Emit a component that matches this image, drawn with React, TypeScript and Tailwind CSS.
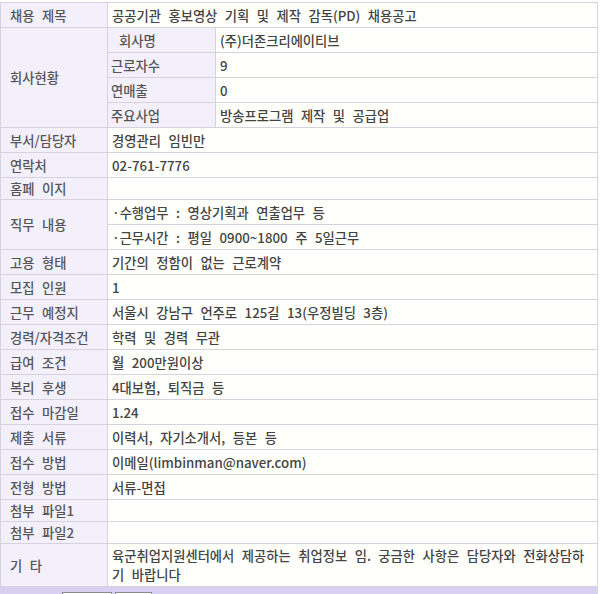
const label = "flex items-center pl-[9px] bg-[#f3f0fc] text-[#555]";
const sub = "flex items-center pl-[3px] bg-[#f3f0fc] text-[#555] h-[24px]";
const val = "flex items-center pl-[4px] bg-[#fffffb] text-[#444]";

type Row = { label: string; value?: string; empty?: boolean };

const rowsA: Row[] = [
  { label: "부서/담당자", value: "경영관리 임빈만" },
  { label: "연락처", value: "02-761-7776" },
  { label: "홈페 이지", empty: true },
];

const rowsB: Row[] = [
  { label: "고용 형태", value: "기간의 정함이 없는 근로계약" },
  { label: "모집 인원", value: "1" },
  { label: "근무 예정지", value: "서울시 강남구 언주로 125길 13(우정빌딩 3층)" },
  { label: "경력/자격조건", value: "학력 및 경력 무관" },
  { label: "급여 조건", value: "월 200만원이상" },
  { label: "복리 후생", value: "4대보험, 퇴직금 등" },
  { label: "접수 마감일", value: "1.24" },
  { label: "제출 서류", value: "이력서, 자기소개서, 등본 등" },
  { label: "접수 방법", value: "이메일(limbinman@naver.com)" },
  { label: "전형 방법", value: "서류-면접" },
  { label: "첨부 파일1", empty: true },
  { label: "첨부 파일2", empty: true },
];

const company = [
  { label: "회사명", value: "(주)더존크리에이티브", pad: "pl-[11px]" },
  { label: "근로자수", value: "9", pad: "" },
  { label: "연매출", value: "0", pad: "" },
  { label: "주요사업", value: "방송프로그램 제작 및 공급업", pad: "" },
];

function Simple({ row }: { row: Row }) {
  const h = row.empty ? "h-[21px]" : "h-[24px]";
  return (
    <>
      <div className={`${label} ${h}`}>{row.label}</div>
      <div className={`${val} ${h} col-span-2`}>{row.value}</div>
    </>
  );
}

export default function App() {
  return (
    <div className="w-[601px] h-[594px] overflow-hidden bg-white pt-[2px] font-['Noto_Sans_CJK_KR',sans-serif] font-medium text-[13.3px] leading-[19px] [word-spacing:4.5px]">
      <div className="w-[598px] grid grid-cols-[106px_107px_381px] gap-px p-px bg-[#d6d2e0]">
        <div className={`${label} h-[24px]`}>채용 제목</div>
        <div className={`${val} h-[24px] col-span-2`}>
          공공기관 홍보영상 기획 및 제작 감독(PD) 채용공고
        </div>

        <div className={`${label} row-span-4`}>회사현황</div>
        {company.map((c) => (
          <div key={c.label} className="contents">
            <div className={`${sub} ${c.pad}`}>{c.label}</div>
            <div className={`${val} pl-[3px] h-[24px]`}>{c.value}</div>
          </div>
        ))}

        {rowsA.map((r) => (
          <Simple key={r.label} row={r} />
        ))}

        <div className={`${label} row-span-2`}>직무 내용</div>
        <div className={`${val} h-[24px] col-span-2`}>·수행업무 : 영상기획과 연출업무 등</div>
        <div className={`${val} h-[24px] col-span-2`}>·근무시간 : 평일 0900~1800 주 5일근무</div>

        {rowsB.map((r) => (
          <Simple key={r.label} row={r} />
        ))}

        <div className={`${label} h-[42px]`}>기 타</div>
        <div className={`${val} h-[42px] col-span-2`}>
          <span>
            육군취업지원센터에서 제공하는 취업정보 임. 궁금한 사항은 담당자와 전화상담하
            <br />기 바랍니다
          </span>
        </div>
      </div>
      <div className="w-[598px] h-[20px] bg-[#d8d0f0] flex gap-[3px] pl-[62px] pt-[5px]">
        <button className="w-[50px] h-[22px] bg-white border border-[#8a8a8a] text-[12px] text-[#333] leading-[20px]">
          목록
        </button>
        <button className="w-[37px] h-[22px] bg-white border border-[#8a8a8a] text-[12px] text-[#333] leading-[20px]">
          인쇄
        </button>
      </div>
    </div>
  );
}
